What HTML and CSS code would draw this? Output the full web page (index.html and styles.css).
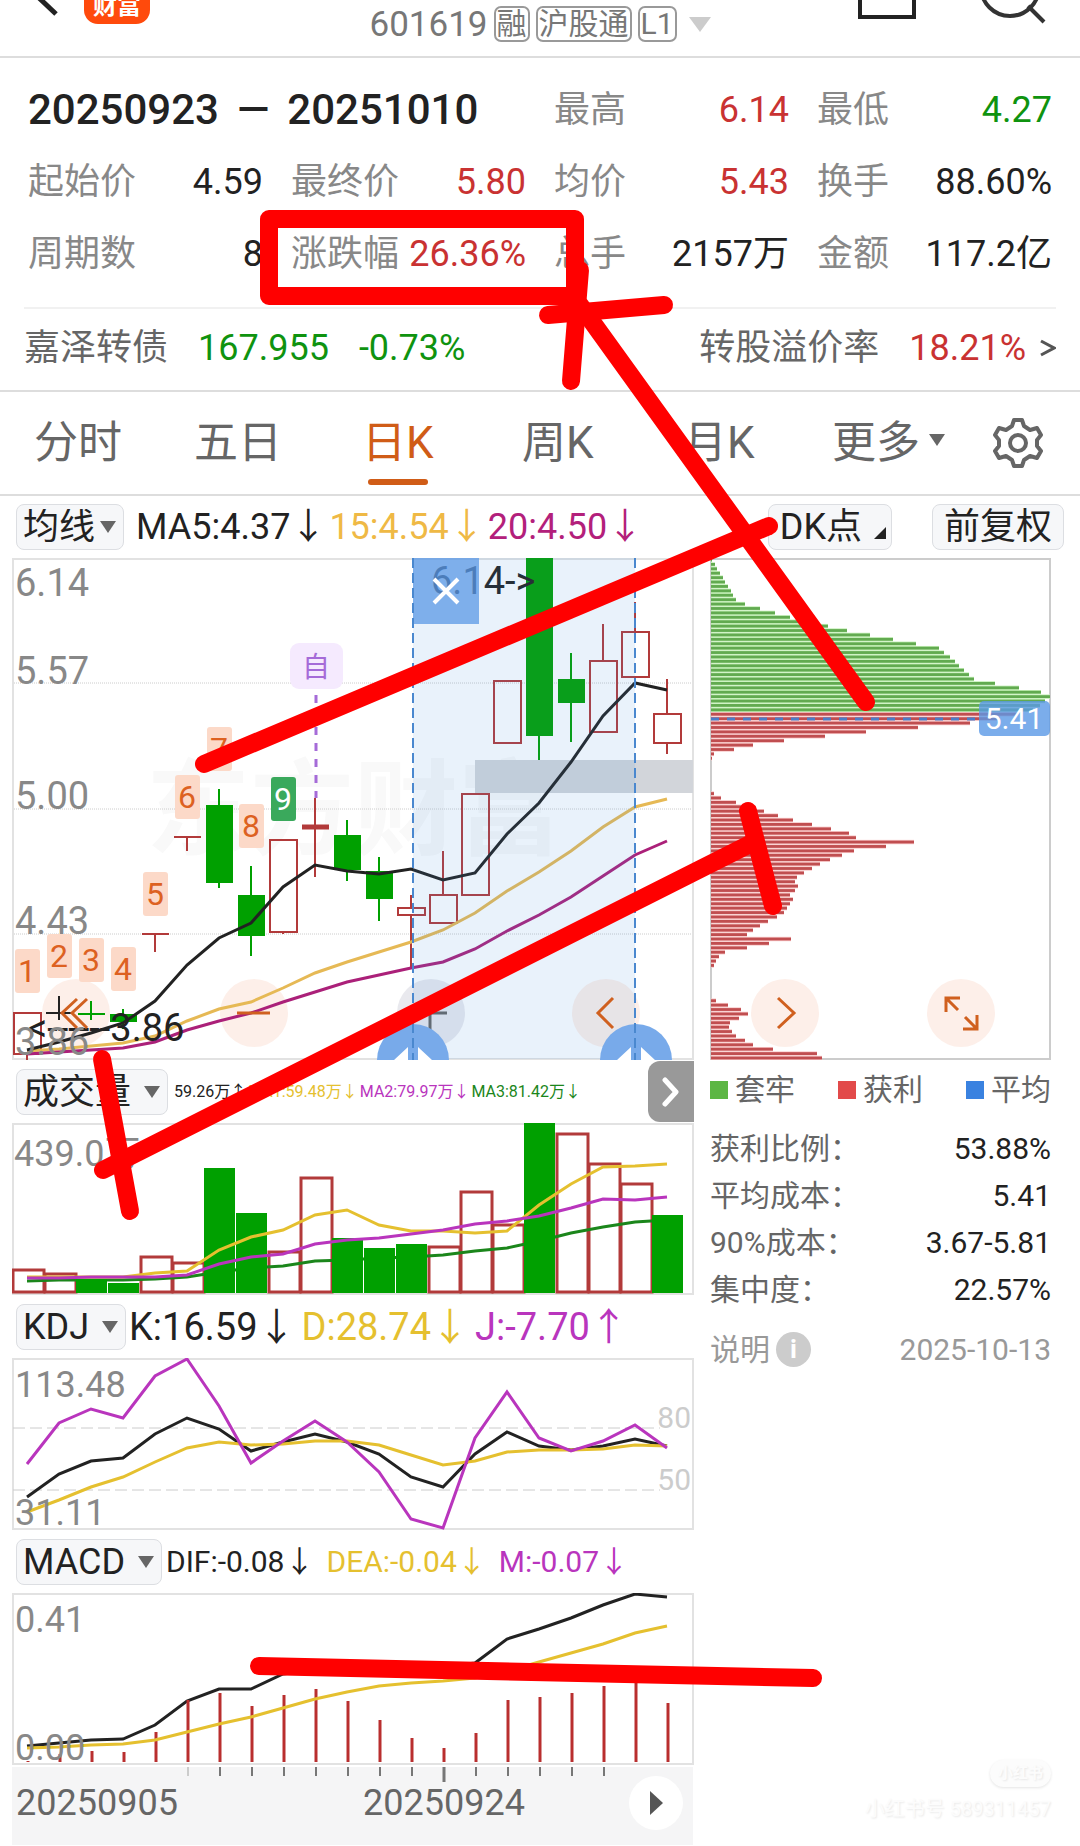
FILE: index.html
```html
<!DOCTYPE html>
<html lang="zh-CN">
<head>
  <meta charset="UTF-8" />
  <meta name="viewport" content="width=device-width, initial-scale=1.0" />
  <title>601619 日K</title>
  <link rel="stylesheet" href="styles.css">
</head>
<body>
  <div class="page">
    <header class="topbar">
      <div class="topbar-left">
        <button class="icon-btn" aria-label="返回">
          <svg width="60" height="24" viewBox="0 0 60 24"><path d="M37 -4 L56 14" stroke="#222" stroke-width="5" fill="none" /></svg>
        </button>
        <div class="app-logo">财富</div>
      </div>
      <div class="stock-code">
        <span>601619</span>
        <span class="tag">融</span>
        <span class="tag">沪股通</span>
        <span class="tag">L1</span>
        <span class="code-arrow"></span>
      </div>
      <div class="topbar-right">
        <button class="icon-btn" aria-label="窗口">
          <svg width="60" height="24" viewBox="0 0 60 24"><path d="M4 -6 V17 H58 V-6" stroke="#222" stroke-width="4" fill="none" /></svg>
        </button>
        <button class="icon-btn" aria-label="搜索">
          <svg width="70" height="24" viewBox="0 0 70 24"><circle cx="32" cy="-13" r="29" stroke="#333" stroke-width="4" fill="none" /><path d="M50 6 L66 22" stroke="#333" stroke-width="4" /></svg>
        </button>
      </div>
    </header>

    <section class="summary">
      <div class="summary-grid">
        <div class="range"><span>20250923</span><span>—</span><span>20251010</span></div>
        <div class="cell"><span>最高</span><b class="up">6.14</b></div>
        <div class="cell"><span>最低</span><b class="down">4.27</b></div>
        <div class="cell"><span>起始价</span><b>4.59</b></div>
        <div class="cell"><span>最终价</span><b class="up">5.80</b></div>
        <div class="cell"><span>均价</span><b class="up">5.43</b></div>
        <div class="cell"><span>换手</span><b>88.60%</b></div>
        <div class="cell"><span>周期数</span><b>8</b></div>
        <div class="cell"><span>涨跌幅</span><b class="up">26.36%</b></div>
        <div class="cell"><span>总手</span><b>2157万</b></div>
        <div class="cell"><span>金额</span><b>117.2亿</b></div>
      </div>
      <a class="bond" href="#">
        <span>嘉泽转债</span>
        <span class="down">167.955</span>
        <span class="down">-0.73%</span>
        <span class="bond-right">转股溢价率</span>
        <span class="up">18.21%</span>
        <svg width="16" height="20" viewBox="0 0 16 20"><path d="M1 3 L14 10 L1 17" stroke="#555" stroke-width="3" fill="none" /></svg>
      </a>
    </section>

    <nav class="tabs">
      <a href="#">分时</a>
      <a href="#">五日</a>
      <a href="#" class="active">日K</a>
      <a href="#">周K</a>
      <a href="#">月K</a>
      <a href="#" class="more">更多</a>
      <button class="icon-btn" aria-label="设置">
        <svg width="52" height="52" viewBox="0 0 52 52" fill="none" stroke="#666" stroke-width="4" stroke-linejoin="round">
          <path d="M22 3 H30 L32 9 L38 13 L45 11 L49 18 L45 23 V29 L49 34 L45 41 L38 39 L32 43 L30 49 H22 L20 43 L14 39 L7 41 L3 34 L7 29 V23 L3 18 L7 11 L14 13 L20 9 Z" />
          <circle cx="26" cy="26" r="8" />
        </svg>
      </button>
    </nav>

    <div class="tools">
      <label class="picker tight"><select aria-label="均线"><option>均线</option></select></label>
      <div class="readings ma">
        <span>MA5:4.37↓</span><span class="c-orange">15:4.54↓</span><span class="c-purple">20:4.50↓</span>
      </div>
      <button class="chip-btn dk">DK点</button>
      <button class="chip-btn">前复权</button>
    </div>

    <main class="panel">
      <div class="charts">
        <svg id="price" viewBox="12 559 682 502"></svg>

        <div class="row">
          <label class="picker"><select aria-label="成交量"><option>成交量</option></select></label>
          <div class="readings vol">
            <span>59.26万↑</span><span class="c-yellow">MA1:59.48万↓</span><span class="c-magenta">MA2:79.97万↓</span><span class="c-green">MA3:81.42万↓</span>
          </div>
          <button class="next" aria-label="更多指标">
            <svg width="18" height="30" viewBox="0 0 18 30"><path d="M3 3 L14 15 L3 27" stroke="#fff" stroke-width="5" stroke-linecap="round" stroke-linejoin="round" fill="none" /></svg>
          </button>
        </div>
        <svg id="volume" viewBox="12 1124 682 172"></svg>

        <div class="row">
          <label class="picker"><select aria-label="KDJ"><option>KDJ</option></select></label>
          <div class="readings kdj">
            <span>K:16.59↓</span><span class="c-yellow">D:28.74↓</span><span class="c-magenta">J:-7.70↑</span>
          </div>
        </div>
        <svg id="kdj" viewBox="12 1359 682 172"></svg>

        <div class="row">
          <label class="picker"><select aria-label="MACD"><option>MACD</option></select></label>
          <div class="readings macd">
            <span>DIF:-0.08↓</span><span class="c-yellow">DEA:-0.04↓</span><span class="c-magenta">M:-0.07↓</span>
          </div>
        </div>
        <svg id="macd" viewBox="12 1594 682 172"></svg>
        <svg id="axis" viewBox="12 1766 682 80"></svg>
      </div>

      <aside class="chips">
        <svg id="chips" viewBox="710 559 341 502"></svg>
        <div class="legend">
          <span class="lg-green">套牢</span><span class="lg-red">获利</span><span class="lg-blue">平均</span>
        </div>
        <dl class="facts">
          <div><dt>获利比例：</dt><dd>53.88%</dd></div>
          <div><dt>平均成本：</dt><dd>5.41</dd></div>
          <div><dt>90%成本：</dt><dd>3.67-5.81</dd></div>
          <div><dt>集中度：</dt><dd>22.57%</dd></div>
        </dl>
        <div class="note">
          <span>说明</span><i class="info">i</i><time>2025-10-13</time>
        </div>
        <div class="stamp"><b>小红书</b><span>小红书号 589311457</span></div>
      </aside>
    </main>

    <!-- hand-drawn marks -->
    <svg class="marks" viewBox="0 0 1080 1846">
      <rect x="269" y="219" width="306" height="77" />
      <path d="M580 270 L571 381" />
      <path d="M548 315 L664 305" />
      <path d="M580 305 L866 702" />
      <path d="M204 764 L769 526" />
      <path d="M103 1170 L752 843" />
      <path d="M748 811 L773 906" />
      <path d="M102 1059 L130 1211" />
      <path d="M259 1666 L813 1678" />
    </svg>
  </div>
  <script src="charts.js"></script>
</body>
</html>
```

FILE: styles.css
```css
* {
  box-sizing: border-box;
}
body {
  margin: 0;
  background: #fff;
  color: #222;
  font-family: Roboto, "Noto Sans CJK SC", sans-serif;
  font-size: 36px;
  line-height: 1;
}
button, select {
  font: inherit;
  color: inherit;
  border: 0;
  margin: 0;
  padding: 0;
  background: none;
}
a {
  color: inherit;
  text-decoration: none;
}
svg {
  display: block;
}
.page {
  position: relative;
  overflow: hidden;
}
.up { color: #c93232; }
.down { color: #0f930f; }
.c-orange { color: #efb945; }
.c-purple { color: #b3207b; }
.c-yellow { color: #e5c02f; }
.c-magenta { color: #b935bd; }
.c-green { color: #1b861b; }

/* top bar */
.topbar {
  display: grid;
  grid-template-columns: 1fr auto 1fr;
  height: 58px;
  border-bottom: 2px solid #ddd;
}
.topbar-left, .topbar-right {
  display: flex;
  align-items: flex-start;
}
.topbar-left {
  gap: 24px;
}
.topbar-right {
  justify-content: flex-end;
  gap: 62px;
  padding-right: 32px;
}
.app-logo {
  width: 66px;
  height: 24px;
  overflow: hidden;
  display: flex;
  align-items: flex-end;
  justify-content: center;
  padding-bottom: 6px;
  border-radius: 0 0 14px 14px;
  background: #ff4a0c;
  color: #fff;
  font-size: 24px;
  font-weight: 700;
}
.stock-code {
  display: flex;
  align-items: center;
  gap: 6px;
  height: 48px;
  font-size: 35px;
  color: #777;
}
.tag {
  height: 36px;
  padding: 0 1px;
  border: 2px solid #999;
  border-radius: 7px;
  font-size: 30px;
  line-height: 32px;
}
.code-arrow {
  margin-left: 6px;
  border: 11px solid transparent;
  border-top: 15px solid #ccc;
  border-bottom: 0;
}

/* summary */
.summary {
  padding: 16px 24px 3px;
  border-bottom: 2px solid #ddd;
}
.summary-grid {
  display: grid;
  grid-template-columns: repeat(4, 1fr);
  grid-auto-rows: 72px;
  column-gap: 28px;
  align-items: center;
  padding: 0 4px 17px;
  border-bottom: 2px solid #f1f1f1;
}
.range {
  display: flex;
  gap: 18px;
  grid-column: span 2;
  font-size: 42px;
  font-weight: 500;
  white-space: nowrap;
}
.cell {
  display: flex;
  justify-content: space-between;
  white-space: nowrap;
}
.cell span {
  color: #888;
}
.cell b {
  font-weight: 400;
}
.bond {
  display: flex;
  align-items: center;
  height: 78px;
  gap: 30px;
  color: #666;
}
.bond-right {
  margin-left: auto;
}
.bond svg {
  margin-left: -16px;
}

/* tabs */
.tabs {
  display: grid;
  grid-template-columns: 160fr 168fr 160fr 161fr 149fr 160fr 52fr;
  align-items: center;
  height: 104px;
  padding: 0 36px 0 34px;
  border-bottom: 2px solid #ddd;
  font-size: 44px;
  color: #666;
}
.tabs a {
  position: relative;
  justify-self: start;
}
.tabs .active {
  color: #d05c17;
}
.tabs .active::after {
  content: '';
  position: absolute;
  left: 6px;
  bottom: -20px;
  width: 60px;
  height: 6px;
  border-radius: 3px;
  background: #d05c17;
}
.more::after {
  content: '';
  display: inline-block;
  margin-left: 9px;
  vertical-align: 12px;
  border: 8px solid transparent;
  border-top: 12px solid #666;
  border-bottom: 0;
}

/* indicator rows */
.tools, .row {
  display: flex;
  align-items: center;
  white-space: nowrap;
}
.tools {
  height: 62px;
  padding: 0 16px;
}
.row {
  height: 63px;
  padding-left: 4px;
}
.picker {
  display: flex;
  align-items: center;
  height: 46px;
  padding: 0 7px 0 6px;
  border: 1px solid #dcdee2;
  border-radius: 8px;
  background: #f6f7f9;
}
.picker select {
  appearance: none;
  height: 44px;
}
.picker::after {
  content: '';
  margin-left: 12px;
  border: 8px solid transparent;
  border-top: 12px solid #666;
  border-bottom: 0;
}
.tight::after {
  margin-left: 4px;
}
.readings {
  display: flex;
}
.ma {
  margin-left: 12px;
  gap: 3px;
}
.vol {
  margin-left: 6px;
  gap: 2px;
  font-size: 16px;
}
.kdj {
  margin-left: 3px;
  gap: 6px;
  font-size: 38px;
}
.macd {
  margin-left: 4px;
  gap: 12px;
  font-size: 30px;
}
.chip-btn {
  height: 46px;
  padding: 0 11px;
  border: 1px solid #dcdee2;
  border-radius: 8px;
  background: #f6f7f9;
}
.dk {
  margin: 0 40px 0 auto;
  padding-right: 5px;
}
.dk::after {
  content: '';
  display: inline-block;
  margin-left: 12px;
  border-left: 12px solid transparent;
  border-bottom: 12px solid #222;
}
.next {
  display: flex;
  align-items: center;
  justify-content: center;
  width: 46px;
  height: 61px;
  margin-left: auto;
  border-radius: 12px 0 0 12px;
  background: #999;
}

/* charts */
.panel {
  display: grid;
  grid-template-columns: 682fr 341fr;
  column-gap: 16px;
  padding: 0 29px 0 12px;
}
.charts, .chips {
  min-width: 0;
}
.charts > svg, .chips > svg {
  width: 100%;
  height: auto;
}
.scale {
  font-size: 38px;
  fill: #888;
}
.scale-sub {
  font-size: 36px;
  fill: #888;
}
.scale-ref {
  font-size: 30px;
  fill: #ccc;
  text-anchor: end;
}
.scale-date {
  font-size: 36px;
  fill: #666;
}
.mark-price {
  font-size: 38px;
  fill: #222;
}
.count {
  font-size: 32px;
  fill: #dd6121;
  text-anchor: middle;
}
.count-last {
  fill: #fff;
}
.event {
  font-size: 28px;
  fill: #a56bd8;
  text-anchor: middle;
}
.ghost {
  font-size: 104px;
  font-weight: 700;
  fill: #f9f9f9;
}
.cost {
  font-size: 30px;
  fill: #fff;
  text-anchor: middle;
}

/* chip distribution */
.chips {
  display: flex;
  flex-direction: column;
  font-size: 30px;
  color: #666;
}
.legend {
  display: flex;
  justify-content: space-between;
  height: 60px;
  align-items: center;
}
.legend span::before {
  content: '';
  display: inline-block;
  width: 18px;
  height: 18px;
  margin-right: 7px;
  vertical-align: 1px;
}
.lg-green::before { background: #5cb644; }
.lg-red::before { background: #e24a4a; }
.lg-blue::before { background: #3a82e0; }
.facts {
  margin: 5px 0 0;
}
.facts div {
  display: flex;
  align-items: center;
  justify-content: space-between;
  height: 47px;
}
.facts dd {
  margin: 0;
  color: #222;
}
.note {
  display: flex;
  align-items: center;
  height: 47px;
  margin-top: 13px;
  gap: 6px;
  color: #999;
}
.note time {
  margin-left: auto;
}
.info {
  width: 35px;
  height: 35px;
  border-radius: 50%;
  background: #ccc;
  color: #fff;
  font-size: 26px;
  font-style: normal;
  font-weight: 700;
  line-height: 35px;
  text-align: center;
}
.stamp {
  display: flex;
  flex-direction: column;
  align-items: flex-end;
  gap: 12px;
  margin-top: auto;
  padding-bottom: 26px;
  font-size: 20px;
  color: #fcfcfc;
  text-shadow: 1px 1px 2px #e8e8e8;
}
.stamp b {
  padding: 6px 8px;
  border-radius: 14px;
  background: #fcfcfc;
  box-shadow: 0 1px 3px #e4e4e4;
  font-size: 15px;
}

.marks {
  position: absolute;
  top: 0;
  left: 0;
  width: 100%;
  height: auto;
  pointer-events: none;
  fill: none;
  stroke: #f00;
  stroke-width: 18px;
  stroke-linecap: round;
  stroke-linejoin: round;
}
```

FILE: charts.js
```js
// All charts share one coordinate space, each svg shows its own slice of it.
const RED = '#b23a3a', GREEN = '#00a000';
const cx = i => 27 + 32 * i;

const rect = (x, y, w, h, attrs) => `<rect x="${x}" y="${y}" width="${w}" height="${h}" ${attrs}/>`;
const seg = (x1, y1, x2, y2, color, w = 2, extra = '') =>
  `<path d="M${x1} ${y1} L${x2} ${y2}" stroke="${color}" stroke-width="${w}" fill="none" ${extra}/>`;
const text = (x, y, cls, str) => `<text x="${x}" y="${y}" class="${cls}">${str}</text>`;
const line = (ys, color) =>
  `<polyline points="${ys.map((y, i) => cx(i) + ',' + y).join(' ')}" fill="none" stroke="${color}" stroke-width="3"/>`;
const frame = (y, h) => rect(13, y, 680, h, 'fill="none" stroke="#e2e2e2" stroke-width="2"');
const put = (id, parts) => { document.getElementById(id).innerHTML = parts.join(''); };

// ---- price ----
// type, body top, body bottom, wick top, wick bottom
const candles = [
  ['r', 1014, 1055, 1014, 1061], ['x', 1014, 1014, 997, 1021], ['g', 1015, 1015, 1002, 1021],
  ['g', 1015, 1023, 1010, 1030], ['r', 935, 935, 935, 953], ['r', 838, 838, 838, 852],
  ['g', 806, 884, 790, 889], ['g', 896, 937, 867, 957], ['r', 841, 933, 841, 935],
  ['s', 828, 828, 799, 878], ['g', 836, 871, 821, 882], ['g', 872, 900, 858, 922],
  ['r', 909, 916, 896, 970], ['r', 896, 924, 852, 924], ['r', 795, 896, 795, 896],
  ['r', 682, 744, 682, 744], ['g', 559, 737, 559, 761], ['g', 680, 704, 654, 743],
  ['r', 662, 733, 625, 733], ['r', 633, 678, 603, 678], ['r', 715, 744, 680, 755]
];
const drawCandle = ([t, top, bot, hi, lo], i) => {
  const x = cx(i), color = t === 'g' ? GREEN : t === 'x' ? '#222' : RED;
  if (top === bot) return seg(x - 13, top, x + 14, top, color, t === 's' ? 5 : 2) + seg(x, hi, x, lo, color);
  if (t === 'g') return seg(x, hi, x, lo, color) + rect(x - 13, top, 27, bot - top, `fill="${color}"`);
  return seg(x, hi, x, top, color) + seg(x, bot, x, lo, color) +
    rect(x - 13, top, 27, bot - top, `fill="none" stroke="${color}" stroke-width="2"`);
};
const ma5 = [1051, 1043, 1034, 1024, 1002, 966, 939, 924, 888, 866, 872, 875, 870, 881, 874, 835, 804, 763, 717, 684, 691];
const ma15 = [1052, 1050, 1047, 1044, 1037, 1022, 1010, 1003, 989, 974, 963, 953, 943, 931, 914, 892, 873, 852, 828, 808, 800];
const ma20 = [1055, 1053, 1051, 1049, 1043, 1031, 1022, 1014, 1003, 993, 983, 976, 969, 963, 950, 932, 916, 898, 877, 856, 842];
const counts = [[27, 950], [59, 935], [91, 939], [123, 948], [155, 873], [187, 776], [219, 728], [251, 805], [283, 778]];
const round = (x, fill = '#fdebe3') => `<circle cx="${x}" cy="1014" r="34" fill="${fill}" opacity=".8"/>`;
const handle = x => `<path d="M${x - 36} 1061 a36 36 0 0 1 72 0 Z" fill="#78aaea"/>` +
  `<path d="M${x - 19} 1061 L${x - 5} 1048 V1061 Z M${x + 19} 1061 L${x + 5} 1048 V1061 Z" fill="#fff"/>`;

put('price', [
  text(146, 848, 'ghost', '东方财富'),
  ...[684, 810, 935].map(y => seg(12, y, 693, y, '#ccc', 1, 'stroke-dasharray="1 1"')),
  frame(560, 500),
  rect(475, 761, 218, 33, 'fill="#d2d5da"'),
  round(76), round(254), round(431, '#e4e4ea'), round(606),
  ...candles.map(drawCandle),
  line(ma15, '#e6b955'), line(ma20, '#ab2079'), line(ma5, '#222'),
  ...counts.map(([x, y], i) => rect(x - 12, y, 25, 44, `rx="3" fill="${i === 8 ? '#3aa95c' : '#fcd9c8'}"`) +
    text(x, y + 33, 'count' + (i === 8 ? ' count-last' : ''), i + 1)),
  rect(290, 644, 53, 46, 'rx="9" fill="#f5eafe"'), text(316, 678, 'event', '自'),
  seg(316, 696, 316, 799, '#a56bd8', 3, 'stroke-dasharray="8 8"'),
  text(431, 595, 'mark-price', '6.14-&gt;'),
  text(28, 1042, 'mark-price', '&lt;------3.86'),
  '<path d="M77 1000 L62 1014 L77 1029 M87 1000 L72 1014 L87 1029" fill="none" stroke="#d0601f" stroke-width="3"/>',
  seg(237, 1014, 270, 1014, '#d0601f', 3),
  seg(414, 1014, 447, 1014, '#666', 3), seg(430, 998, 430, 1031, '#666', 3),
  rect(413, 559, 222, 501, 'fill="#4a94e0" opacity=".12"'),
  '<path d="M613 999 L598 1014 L613 1029" fill="none" stroke="#d0601f" stroke-width="3"/>',
  rect(413, 559, 66, 66, 'fill="#5a98e6" opacity=".75"'),
  '<path d="M434 580 L458 604 M458 580 L434 604" stroke="#fff" stroke-width="4"/>',
  handle(413), handle(636),
  seg(413, 559, 413, 1061, '#4a88cf', 2, 'stroke-dasharray="10 5"'),
  seg(635, 559, 635, 1061, '#4a88cf', 2, 'stroke-dasharray="10 5"'),
  text(15, 597, 'scale', '6.14'), text(15, 685, 'scale', '5.57'), text(15, 810, 'scale', '5.00'),
  text(15, 935, 'scale', '4.43'), text(15, 1056, 'scale', '3.86')
]);

// ---- volume ----
const vols = [1271, 1275, 1280, 1284, 1258, 1264, 1169, 1214, 1253, 1179, 1239, 1249, 1245, 1248, 1193, 1226, 1124, 1135, 1165, 1185, 1216];
const falling = [2, 3, 6, 7, 10, 11, 12, 16, 20];
put('volume', [
  frame(1125, 170),
  text(14, 1167, 'scale-sub', '439.0万'),
  ...vols.map((y, i) => falling.includes(i) ? '' :
    rect(13 + 32 * i, y, 31, 1293 - y, `fill="none" stroke="${RED}" stroke-width="3"`)),
  line([1282, 1281, 1281, 1281, 1280, 1278, 1273, 1269, 1267, 1262, 1261, 1259, 1258, 1256, 1252, 1249, 1242, 1234, 1228, 1223, 1221], '#1b861b'),
  ...vols.map((y, i) => falling.includes(i) ? rect(12 + 32 * i, y, 31, 1294 - y, `fill="${GREEN}"`) : ''),
  line([1278, 1278, 1278, 1278, 1274, 1272, 1251, 1238, 1231, 1216, 1211, 1226, 1232, 1232, 1234, 1232, 1206, 1185, 1168, 1167, 1165], '#e5c02f'),
  line([1279, 1279, 1278, 1278, 1278, 1276, 1265, 1258, 1255, 1245, 1241, 1239, 1235, 1231, 1225, 1222, 1217, 1209, 1200, 1201, 1198], '#b935bd')
]);

// ---- KDJ ----
put('kdj', [
  frame(1360, 170),
  ...[1429, 1491].map(y => seg(13, y, 660, y, '#ccc', 1, 'stroke-dasharray="12 5"')),
  text(691, 1429, 'scale-ref', '80'), text(691, 1491, 'scale-ref', '50'),
  line([1498, 1475, 1462, 1459, 1435, 1419, 1430, 1452, 1443, 1435, 1443, 1455, 1478, 1488, 1455, 1433, 1447, 1451, 1447, 1440, 1447], '#222'),
  line([1513, 1501, 1488, 1478, 1463, 1449, 1443, 1446, 1445, 1442, 1442, 1446, 1456, 1466, 1462, 1453, 1451, 1451, 1450, 1446, 1447], '#e5c02f'),
  line([1465, 1424, 1410, 1419, 1377, 1360, 1407, 1464, 1442, 1422, 1443, 1473, 1520, 1529, 1439, 1393, 1439, 1452, 1442, 1426, 1449], '#b935bd'),
  text(15, 1398, 'scale-sub', '113.48'), text(15, 1526, 'scale-sub', '31.11')
]);

// ---- MACD ----
const hist = [1762, 1755, 1752, 1753, 1733, 1701, 1694, 1707, 1696, 1690, 1702, 1721, 1739, 1749, 1734, 1701, 1698, 1694, 1687, 1682, 1704];
put('macd', [
  frame(1595, 170),
  line([1747, 1744, 1741, 1740, 1726, 1702, 1690, 1690, 1675, 1671, 1669, 1669, 1669, 1668, 1664, 1640, 1630, 1619, 1606, 1595, 1598], '#222'),
  ...hist.map((y, i) => seg(cx(i) + 1, y, cx(i) + 1, 1763, '#b92f2f', 3)),
  line([1749, 1748, 1746, 1745, 1741, 1733, 1725, 1718, 1709, 1700, 1693, 1687, 1684, 1682, 1679, 1672, 1663, 1654, 1645, 1634, 1627], '#e5c02f'),
  text(15, 1633, 'scale-sub', '0.41'), text(15, 1761, 'scale-sub', '0.00')
]);

const ticks = [];
for (let i = 5; i <= 18; i++) {
  ticks.push(seg(cx(i) + 1, 1768, cx(i) + 1, i === 13 ? 1783 : 1777, i === 5 ? '#ccc' : '#777', i === 13 ? 3 : 2));
}
put('axis', [
  rect(12, 1768, 681, 78, 'fill="#f5f5f6"'),
  ...ticks,
  text(16, 1816, 'scale-date', '20250905'), text(363, 1816, 'scale-date', '20250924'),
  '<circle cx="656" cy="1804" r="27" fill="#fff"/><path d="M650 1792 L663 1804 L650 1816 Z" fill="#555"/>'
]);

// ---- chip distribution ----
const none = Array(7).fill(0);
const above = [1, 4, 6, 9, 12, 14, 17, 20, 22, 25, 34, 49, 64, 79, 98, 117, 136, 159, 182, 205, 228, 233, 239, 244,
  248, 253, 258, 263, 284, 308, 330, 339, 334, 329, 322];
const below = [306, 289, 259, 207, 155, 114, 73, 42, 23, 3, 1, ...none,
  3, 10, 25, 39, 53, 67, 82, 101, 120, 138, 145, 203, 175, 143, 131, 119, 109, 101, 93, 86,
  84, 87, 84, 79, 82, 79, 76, 73, 66, 57, 49, 42, 36, 80, 58, 36, 14, 8, 5, 3, ...none,
  5, 17, 30, 37, 28, 19, 18, 21, 25, 34, 42, 62, 106, 111];
const bars = [...above, ...below].map((w, i) => {
  if (!w) return '';
  const y = 561 + i * 4.407, green = i < above.length;
  return rect(711, y - 2.2, w, 4.4, `fill="${green ? '#c6f0b9' : '#f8c8c8'}"`) +
    rect(711, y - 1.4, w, 2.8, `fill="${green ? '#62aa50' : '#c04e50'}"`);
});
put('chips', [
  rect(711, 560, 339, 500, 'fill="none" stroke="#ccc" stroke-width="2"'),
  ...bars,
  seg(711, 720, 980, 720, '#4a7cc8', 3, 'stroke-dasharray="8 8"'),
  rect(979, 702, 71, 35, 'rx="5" fill="#5a98e6" opacity=".8"'), text(1014, 730, 'cost', '5.41'),
  round(785), round(961),
  '<path d="M778 999 L794 1014 L778 1029" fill="none" stroke="#d0601f" stroke-width="3"/>',
  '<path d="M960 999 H946 V1013 M946 999 L958 1011 M963 1030 H977 V1016 M977 1030 L965 1018" fill="none" stroke="#d0601f" stroke-width="3"/>'
]);
```
